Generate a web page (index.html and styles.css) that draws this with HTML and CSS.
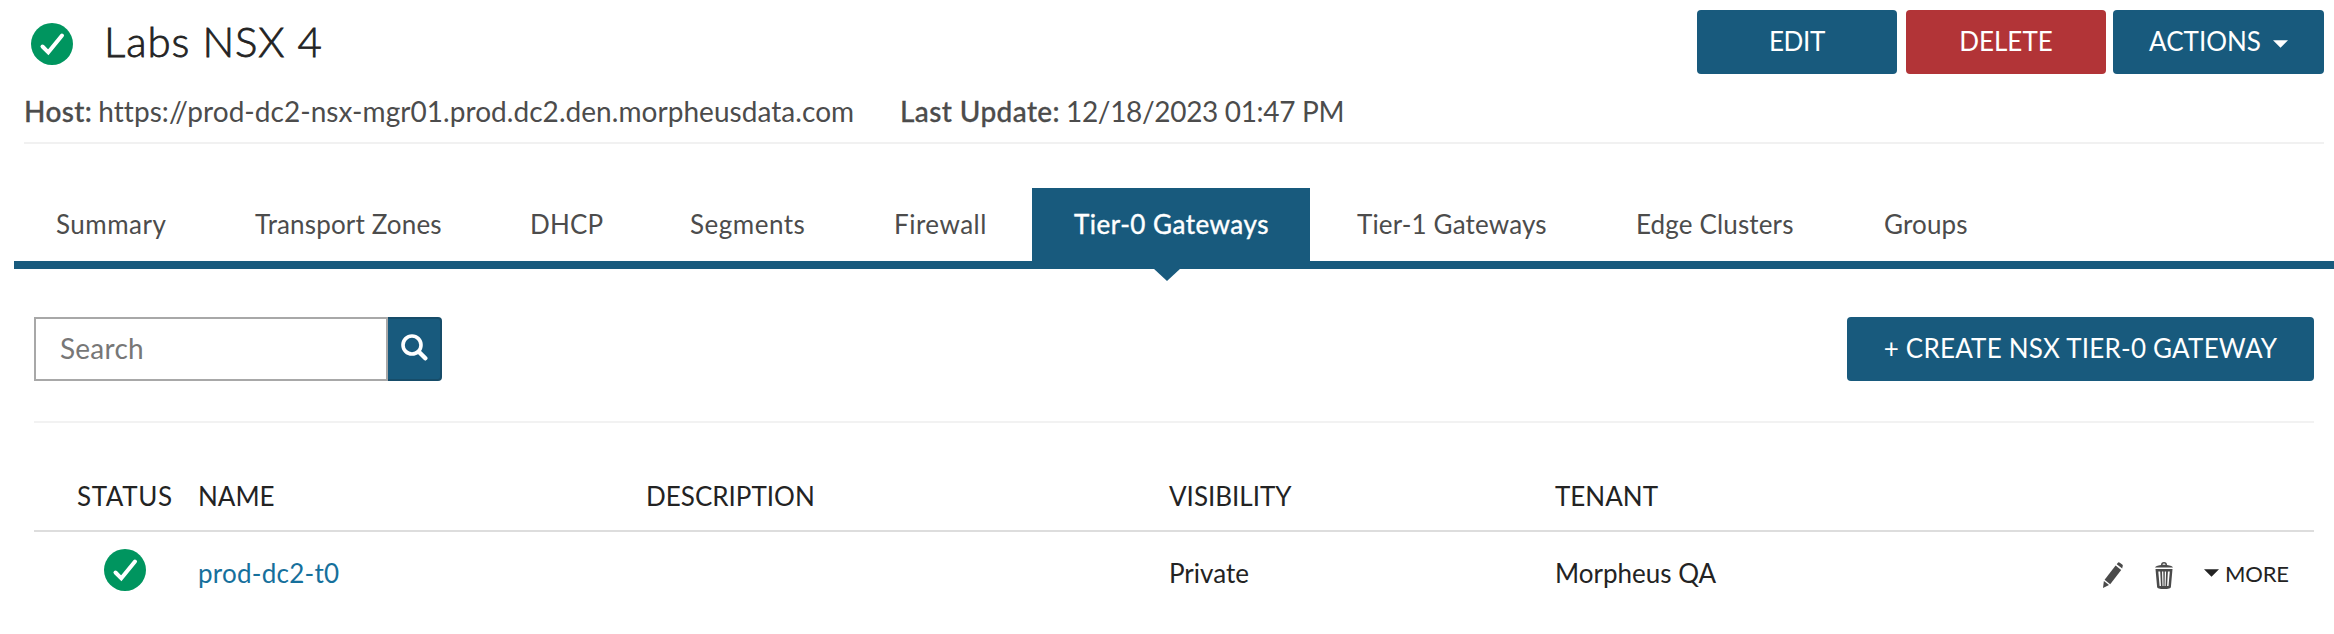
FILE: index.html
```html
<!DOCTYPE html>
<html lang="en">
<head>
<meta charset="utf-8">
<title>Labs NSX 4</title>
<link rel="stylesheet" href="styles.css">
</head>
<body>
<svg class="defs" aria-hidden="true">
  <symbol id="status-ok" viewBox="0 0 42 42">
    <circle cx="21" cy="21" r="21" fill="#00955f"/>
    <path d="M11.5 23.5 17.3 29.3 31 12.5" fill="none" stroke="#fff" stroke-width="4" stroke-linecap="round" stroke-linejoin="miter"/>
  </symbol>
</svg>

<header class="header">
  <div class="title-row">
    <svg class="status"><use href="#status-ok"/></svg>
    <h1 class="title">Labs NSX 4</h1>
    <div class="actions">
      <button class="btn btn-edit">EDIT</button>
      <button class="btn btn-danger">DELETE</button>
      <button class="btn btn-menu">ACTIONS<svg class="caret-light" viewBox="0 0 16 8"><path d="M0 0H16L8 8Z"/></svg></button>
    </div>
  </div>
  <div class="meta">
    <span class="meta-item meta-host"><b class="label">Host:</b><span class="host">https://prod-dc2-nsx-mgr01.prod.dc2.den.morpheusdata.com</span></span>
    <span class="meta-item"><b class="label">Last Update:</b><span class="date">12/18/2023 01:47 PM</span></span>
  </div>
</header>

<nav class="tabs">
  <a class="tab wide">Summary</a>
  <a class="tab">Transport Zones</a>
  <a class="tab">DHCP</a>
  <a class="tab wide">Segments</a>
  <a class="tab wide">Firewall</a>
  <a class="tab active">Tier-0 Gateways</a>
  <a class="tab">Tier-1 Gateways</a>
  <a class="tab">Edge Clusters</a>
  <a class="tab">Groups</a>
</nav>

<main class="content">
  <div class="toolbar">
    <div class="search">
      <input class="search-input" type="text" placeholder="Search">
      <button class="search-btn" aria-label="Search"><svg class="search-icon" viewBox="0 0 27 27"><circle cx="11" cy="11" r="9" fill="none" stroke="#fff" stroke-width="3.6"/><path d="M17.8 17.8 24.3 24.3" stroke="#fff" stroke-width="4.4" stroke-linecap="round"/></svg></button>
    </div>
    <button class="btn btn-create">+ CREATE NSX TIER-0 GATEWAY</button>
  </div>

  <div class="row head">
    <span class="col-status">STATUS</span>
    <span>NAME</span>
    <span>DESCRIPTION</span>
    <span>VISIBILITY</span>
    <span>TENANT</span>
  </div>
  <div class="row item">
    <span class="col-icon"><svg class="status"><use href="#status-ok"/></svg></span>
    <a class="name">prod-dc2-t0</a>
    <span></span>
    <span>Private</span>
    <span>Morpheus QA</span>
    <span class="tools">
      <svg class="pencil" viewBox="0 0 20 26" fill="#4a4a4a"><path d="M12.6 3.6 18.2 8 7.2 22.2 1.6 17.8Z"/><path d="M13.7 2.2 14.7.9Q15.6-.1 16.8.7L19.2 2.6Q20.3 3.6 19.5 4.8L19.2 6.6Z"/><path d="M.9 19 6 23 0 26Z"/></svg>
      <svg class="trash" viewBox="0 0 18 27" fill="#4a4a4a"><path d="M6 3Q6 0 9 0T12 3Q17.5 3.6 18 5.6H0Q.5 3.6 6 3ZM7.4 2.8H10.6Q10.4 1.4 9 1.4T7.4 2.8Z" fill-rule="evenodd"/><path d="M.5 7H17.5L15.9 25Q15.7 27 9 27T2.1 25ZM3.3 9.4 4.6 24H6L5.2 9.4ZM7 9.4 7.5 24H8.5L8.3 9.4ZM9.8 9.4 9.6 24H10.6L11.1 9.4ZM12.9 9.4 12.1 24H13.5L14.8 9.4Z" fill-rule="evenodd"/></svg>
      <span class="more"><svg class="caret-dark" viewBox="0 0 16 8"><path d="M0 0H16L8 8Z"/></svg>MORE</span>
    </span>
  </div>
</main>
</body>
</html>
```
FILE: styles.css
```css
* { box-sizing: border-box; }

body {
  margin: 0;
  background: #fff;
  color: #232323;
  font: 26px/32px Lato, "Noto Sans", sans-serif;
  font-kerning: normal;
}

svg { display: block; flex: none; }
.defs { position: absolute; width: 0; height: 0; }
.status { width: 42px; height: 42px; }

/* Page header */
.header {
  height: 144px;
  margin: 0 10px 0 24px;
  border-bottom: 2px solid #f1f1f1;
}
.title-row { display: flex; height: 95px; padding-top: 10px; }
.title-row > .status { margin: 13px 0 0 7px; }
.title {
  margin: 7px 0 0 31px;
  font-size: 42px;
  line-height: 48px;
  font-weight: 300;
  letter-spacing: .9px;
  -webkit-text-stroke: .8px;
}
.actions { display: flex; margin-left: auto; }

.btn {
  display: flex;
  justify-content: center;
  align-items: center;
  height: 64px;
  padding: 0 0 2px;
  border: 0;
  border-radius: 4px;
  background: #185a7d;
  color: #fff;
  font: inherit;
  white-space: nowrap;
}
.btn-edit { width: 200px; margin-right: 9px; letter-spacing: -.3px; }
.btn-danger { width: 200px; margin-right: 7px; background: #b23437; }
.btn-menu { width: 211px; }
.btn-create { width: 467px; letter-spacing: .21px; }
.caret-light { width: 15px; height: 8px; margin: 5px 0 0 12px; fill: #fff; }

.meta {
  display: flex;
  height: 32px;
  color: #4c4c4c;
  font-size: 28px;
}
.meta-item { display: flex; white-space: nowrap; }
.meta-host { width: 876px; }
.label { margin-right: 6px; font-weight: 500; letter-spacing: .4px; -webkit-text-stroke: .3px; }
.host { letter-spacing: .05px; }
.date { letter-spacing: -.33px; }

/* Tabs */
.tabs {
  display: grid;
  grid-template-columns: 199px 275px 160px 204px 180px 283px 279px 248px 1fr;
  height: 81px;
  margin: 44px 0 0 14px;
  border-bottom: 8px solid #185a7d;
  color: #4c4c4c;
}
.tab { padding: 0 0 0 42px; line-height: 73px; letter-spacing: .15px; white-space: nowrap; }
.tab.wide { letter-spacing: .5px; }
.tab.active {
  position: relative;
  width: 278px;
  background: #185a7d;
  color: #fff;
  letter-spacing: .5px;
  -webkit-text-stroke: .4px;
}
.tab.active::after {
  content: "";
  position: absolute;
  top: 80px;
  left: 121px;
  border: 14px solid transparent;
  border-top: 13px solid #185a7d;
  border-bottom: 0;
}

/* Gateway list */
.content { margin: 48px 20px 0 34px; }
.toolbar {
  display: flex;
  justify-content: space-between;
  height: 106px;
  border-bottom: 2px solid #f2f2f2;
}
.search { display: flex; height: 64px; }
.search-input {
  width: 354px;
  height: 64px;
  padding: 0 24px 2px;
  border: 2px solid #a8a8a8;
  border-radius: 0;
  background: #fff;
  font: 28px/32px Lato, "Noto Sans", sans-serif;
  letter-spacing: .24px;
}
.search-input::placeholder { color: #777; opacity: 1; }
.search-btn {
  width: 54px;
  height: 64px;
  padding: 0 0 4px 13px;
  border: 2px solid #164c69;
  border-left: 0;
  border-radius: 0 4px 4px 0;
  background: #185a7d;
}
.search-icon { width: 27px; height: 27px; }

.row {
  display: grid;
  grid-template-columns: 164px 448px 523px 386px 545px 1fr;
  white-space: nowrap;
}
.head { height: 109px; padding-top: 57px; border-bottom: 2px solid #ddd; }
.item { height: 80px; padding-top: 25px; }
.col-status { padding-left: 43px; letter-spacing: .6px; }
.col-icon { padding-left: 70px; margin-top: -8px; }
.name { color: #16709c; letter-spacing: .25px; }
.tools { display: flex; height: 32px; }
.pencil { width: 20px; height: 26px; margin: 5px 0 0 3px; }
.trash { width: 18px; height: 27px; margin: 5px 0 0 32px; }
.more { display: flex; margin-left: 31px; font-size: 22px; line-height: 33px; letter-spacing: -.2px; }
.caret-dark { width: 15px; height: 8px; margin: 12px 6px 0 0; fill: #232323; }
```
